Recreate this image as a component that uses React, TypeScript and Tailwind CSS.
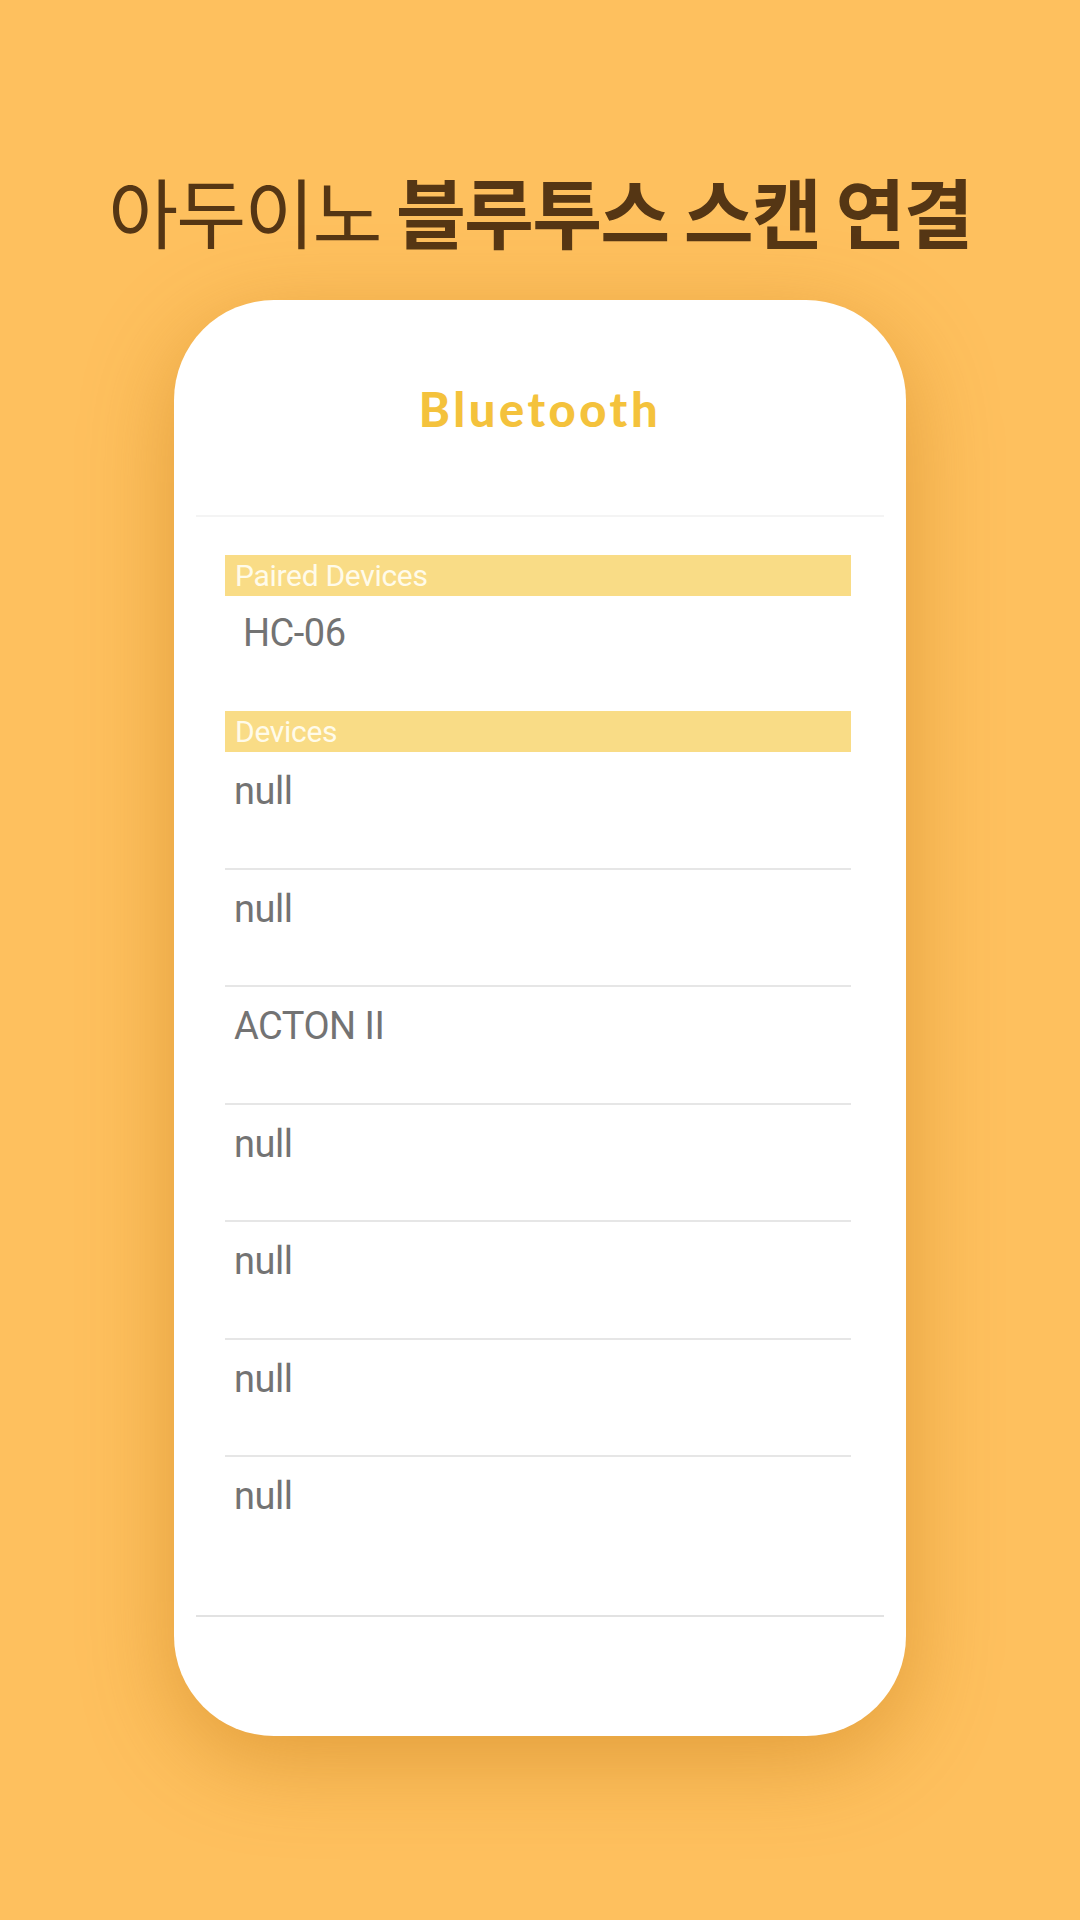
const paired = ["HC-06"];
const devices = ["null", "null", "ACTON II", "null", "null", "null", "null"];

const SectionBar = ({ label }: { label: string }) => (
  <div className="ml-[51px] mr-[55px] h-[41px] bg-[#f9dc86] pl-[10px] flex items-end">
    <span className="text-[30px] leading-[30px] pb-[5px] text-[#fffbea] font-['Roboto',sans-serif] tracking-[-0.3px]">
      {label}
    </span>
  </div>
);

const App = () => {
  return (
    <div className="w-[1080px] h-[1920px] bg-[#fec05e] flex flex-col items-center overflow-hidden">
      <h1 className="pt-[172px] text-[76px] leading-none text-[#553614] font-['Noto_Sans_CJK_KR',sans-serif] tracking-[-1.8px] whitespace-nowrap">
        <span className="font-normal">아두이노</span>{" "}
        <span className="font-bold">블루투스 스캔 연결</span>
      </h1>

      <div className="mt-[52px] w-[732px] h-[1436px] bg-white rounded-[100px] shadow-[0_24px_90px_rgba(190,115,15,0.45)] flex flex-col">
        <div className="h-[217px] border-b-2 border-[#f4f4f4] mx-[22px] flex justify-center pt-[86px]">
          <span className="text-[47px] leading-none font-black text-[#f4c23c] font-['Lato',sans-serif] tracking-[3.6px]">
            Bluetooth
          </span>
        </div>

        <div className="pt-[38px] font-['Roboto',sans-serif] text-[#737373]">
          <SectionBar label="Paired Devices" />
          {paired.map((name, i) => (
            <div key={i} className="ml-[51px] mr-[55px] h-[115px] pl-[18px] pt-[18px]">
              <span className="text-[38px] leading-[38px] tracking-[-0.5px]">{name}</span>
            </div>
          ))}

          <SectionBar label="Devices" />
          <div className="ml-[51px] mr-[55px]">
            {devices.map((name, i) => (
              <div
                key={i}
                className={
                  i < devices.length - 1
                    ? "h-[117.5px] pl-[9px] pt-[20px] border-b-2 border-[#e6e6e6]"
                    : "h-[117.5px] pl-[9px] pt-[20px]"
                }
              >
                <span className="text-[38px] leading-[38px] tracking-[-0.5px]">{name}</span>
              </div>
            ))}
          </div>
        </div>

        <div className="mx-[22px] mt-[40px] border-b-2 border-[#e2e2e2]" />
      </div>
    </div>
  );
};

export default App;
